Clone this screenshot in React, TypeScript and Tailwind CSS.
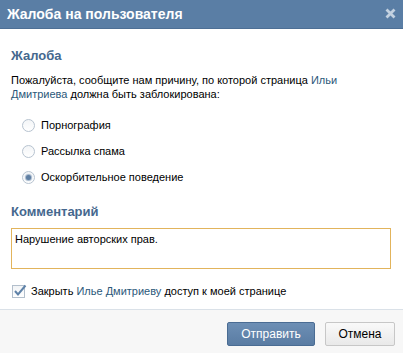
import React, { useState } from "react";

const reasons = ["Порнография", "Рассылка спама", "Оскорбительное поведение"];

const Radio = ({ checked }: { checked: boolean }) => (
  <span className="flex h-[13px] w-[13px] items-center justify-center rounded-full border border-[#b7c3d0] bg-gradient-to-b from-[#f3f5f7] to-white">
    {checked && (
      <span className="h-[5px] w-[5px] rounded-full bg-[#5f7fa3] shadow-[0_0_1px_1px_#9fb2c8]" />
    )}
  </span>
);

const App = () => {
  const [selected, setSelected] = useState(2); // выбранная причина
  const [closeAccess, setCloseAccess] = useState(true);

  return (
    <div className="flex h-[353px] w-[403px] flex-col bg-white font-['Liberation_Sans',Arial,sans-serif] text-[11px] text-black">
      {/* заголовок */}
      <div className="flex h-[29px] shrink-0 items-center justify-between border-b border-[#4d6f95] bg-[#5a7ea5] pl-[7px] pr-[7px]">
        <span className="text-[14px] font-bold leading-none text-white">
          Жалоба на пользователя
        </span>
        <svg width="11" height="11" viewBox="0 0 11 11" className="mt-[-1px]">
          <path d="M1.5 1.5 L9.5 9.5 M9.5 1.5 L1.5 9.5" stroke="#c3d1e0" strokeWidth="2.8" />
        </svg>
      </div>

      <div className="flex flex-1 flex-col pl-[11px] pr-[12px] pt-[19px]">
        <div className="text-[13px] font-bold leading-[16px] text-[#45688e]">Жалоба</div>
        <p className="mt-[9px] leading-[14px]">
          Пожалуйста, сообщите нам причину, по которой страница{" "}
          <a className="text-[#2b587a]">Ильи</a> <a className="text-[#2b587a]">Дмитриева</a>{" "}
          должна быть заблокирована:
        </p>

        <div className="mt-[17px] flex flex-col gap-[12px] pl-[11px]">
          {reasons.map((r, i) => (
            <label
              key={r}
              className="flex h-[14px] cursor-pointer items-center gap-[6px]"
              onClick={() => setSelected(i)}
            >
              <Radio checked={selected === i} />
              <span className="leading-[14px]">{r}</span>
            </label>
          ))}
        </div>

        <div className="mt-[20px] text-[13px] font-bold leading-[16px] text-[#45688e]">
          Комментарий
        </div>
        <textarea
          className="mt-[8px] h-[41px] w-full resize-none border border-[#e2b45c] px-[3px] py-[3px] text-[11px] leading-[14px] outline-none"
          defaultValue="Нарушение авторских прав."
        />

        <label
          className="mt-[15px] flex h-[14px] cursor-pointer items-center gap-[6px] pl-[1px]"
          onClick={() => setCloseAccess(!closeAccess)}
        >
          <span className="relative h-[13px] w-[13px] border border-[#b3bfcc] bg-gradient-to-b from-[#f2f4f6] to-white">
            {closeAccess && (
              <svg width="14" height="13" viewBox="0 0 14 13" className="absolute left-[0px] top-[-2px]">
                <path d="M2 7 L5 10.5 L12.5 1.5" fill="none" stroke="#5f82a8" strokeWidth="2" />
              </svg>
            )}
          </span>
          <span className="leading-[14px]">
            Закрыть <a className="text-[#2b587a]">Илье Дмитриеву</a> доступ к моей странице
          </span>
        </label>
      </div>

      {/* кнопки */}
      <div className="flex h-[44px] shrink-0 items-start justify-end gap-[10px] border-t border-[#dae1e8] bg-[#f7f7f7] pr-[8px] pt-[12px]">
        <button className="h-[24px] w-[88px] rounded-[2px] border border-[#4a6c93] bg-gradient-to-b from-[#6d8fb5] to-[#5a7ca3] text-[12px] text-white">
          Отправить
        </button>
        <button className="h-[24px] w-[70px] rounded-[2px] border border-[#c7c7c7] bg-gradient-to-b from-[#f9f9f9] to-[#e9e9e9] text-[12px] text-black">
          Отмена
        </button>
      </div>
    </div>
  );
};

export default App;
